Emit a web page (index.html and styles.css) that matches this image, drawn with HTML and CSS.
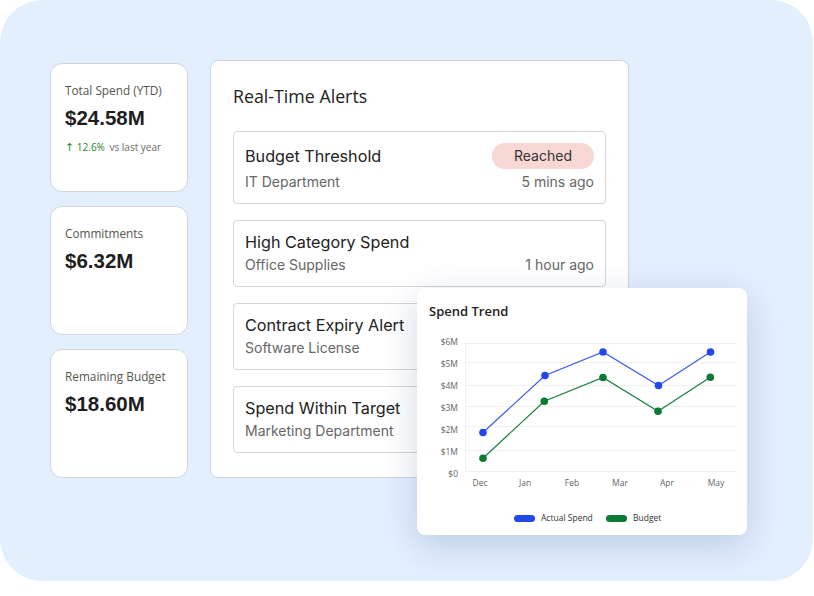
FILE: index.html
```html
<!DOCTYPE html>
<html lang="en">
<head>
    <meta charset="UTF-8">
    <meta name="viewport" content="width=device-width, initial-scale=1.0">
    <title>Spend Dashboard</title>
    <link rel="stylesheet" href="styles.css">
</head>
<body>
    <div class="stage">
        <div class="stats">
            <div class="stat-card">
                <div class="stat-label">Total Spend (YTD)</div>
                <div class="stat-value">$24.58M</div>
                <div class="stat-change"><span class="up"><span class="arrow">&#8593;</span> 12.6%</span> vs last year</div>
            </div>
            <div class="stat-card">
                <div class="stat-label">Commitments</div>
                <div class="stat-value">$6.32M</div>
            </div>
            <div class="stat-card">
                <div class="stat-label">Remaining Budget</div>
                <div class="stat-value">$18.60M</div>
            </div>
        </div>

        <div class="alerts">
            <h2 class="alerts-title">Real-Time Alerts</h2>
            <div class="alert">
                <div class="alert-row">
                    <span class="alert-name">Budget Threshold</span>
                    <span class="badge">Reached</span>
                </div>
                <div class="alert-row sub">
                    <span>IT Department</span>
                    <span>5 mins ago</span>
                </div>
            </div>
            <div class="alert">
                <div class="alert-row">
                    <span class="alert-name">High Category Spend</span>
                </div>
                <div class="alert-row sub">
                    <span>Office Supplies</span>
                    <span>1 hour ago</span>
                </div>
            </div>
            <div class="alert">
                <div class="alert-row">
                    <span class="alert-name">Contract Expiry Alert</span>
                </div>
                <div class="alert-row sub">
                    <span>Software License</span>
                </div>
            </div>
            <div class="alert">
                <div class="alert-row">
                    <span class="alert-name">Spend Within Target</span>
                </div>
                <div class="alert-row sub">
                    <span>Marketing Department</span>
                </div>
            </div>
        </div>

        <div class="trend-card">
            <div class="trend-title">Spend Trend</div>
            <svg class="trend-chart" width="330" height="217" viewBox="417 318 330 217">
                <g class="grid">
                    <line x1="465" y1="343.5" x2="736" y2="343.5"/>
                    <line x1="465" y1="362.5" x2="736" y2="362.5"/>
                    <line x1="465" y1="385.5" x2="736" y2="385.5"/>
                    <line x1="465" y1="406.5" x2="736" y2="406.5"/>
                    <line x1="465" y1="426.5" x2="736" y2="426.5"/>
                    <line x1="465" y1="450.5" x2="736" y2="450.5"/>
                    <line x1="465" y1="471.5" x2="736" y2="471.5"/>
                    <line x1="465.5" y1="343" x2="465.5" y2="472"/>
                </g>
                <g class="y-labels">
                    <text x="458" y="343">$6M</text>
                    <text x="458" y="365">$5M</text>
                    <text x="458" y="387">$4M</text>
                    <text x="458" y="409">$3M</text>
                    <text x="458" y="431">$2M</text>
                    <text x="458" y="453">$1M</text>
                    <text x="458" y="475">$0</text>
                </g>
                <g class="x-labels">
                    <text x="480" y="484">Dec</text>
                    <text x="525" y="484">Jan</text>
                    <text x="572" y="484">Feb</text>
                    <text x="620" y="484">Mar</text>
                    <text x="667" y="484">Apr</text>
                    <text x="716" y="484">May</text>
                </g>
                <g class="series actual">
                    <polyline points="483,432.5 545,375.5 603,352 658.5,385.5 710.5,352"/>
                    <circle cx="483" cy="432.5" r="3.8"/>
                    <circle cx="545" cy="375.5" r="3.8"/>
                    <circle cx="603" cy="352" r="3.8"/>
                    <circle cx="658.5" cy="385.5" r="3.8"/>
                    <circle cx="710.5" cy="352" r="3.8"/>
                </g>
                <g class="series budget">
                    <polyline points="483,458.3 544.3,401.3 603,377.5 658,411.3 710.3,377.3"/>
                    <circle cx="483" cy="458.3" r="3.8"/>
                    <circle cx="544.3" cy="401.3" r="3.8"/>
                    <circle cx="603" cy="377.5" r="3.8"/>
                    <circle cx="658" cy="411.3" r="3.8"/>
                    <circle cx="710.3" cy="377.3" r="3.8"/>
                </g>
                <g class="legend">
                    <rect class="key-actual" x="514" y="515" width="21" height="7" rx="3.5"/>
                    <text x="541" y="518.5">Actual Spend</text>
                    <rect class="key-budget" x="606" y="515" width="21" height="7" rx="3.5"/>
                    <text x="633" y="518.5">Budget</text>
                </g>
            </svg>
        </div>
    </div>
</body>
</html>
```

FILE: styles.css
```css
body {
    margin: 0;
    background-color: #ffffff;
    font-family: "Open Sans", "Noto Sans", sans-serif;
}
.stage {
    position: relative;
    width: 813px;
    height: 581px;
    box-sizing: border-box;
    padding: 60px 0 0 50px;
    background-color: #e4effe;
    border-radius: 42px;
    display: flex;
    flex-direction: row;
    align-items: flex-start;
    gap: 22px;
}
.stats {
    display: flex;
    flex-direction: column;
    gap: 14px;
    margin-top: 3px;
}
.stat-card {
    width: 138px;
    height: 129px;
    box-sizing: border-box;
    padding: 18px 8px 0 14px;
    background: #ffffff;
    border: 1px solid #d3d5d8;
    border-radius: 12px;
}
.stat-label {
    font-size: 11.8px;
    line-height: 16px;
    color: #55564b;
}
.stat-value {
    margin-top: 7px;
    font-family: "Liberation Sans", Arial, sans-serif;
    font-weight: bold;
    font-size: 20.5px;
    line-height: 26px;
    color: #1e1e1e;
}
.stat-change {
    margin-top: 9px;
    font-size: 10px;
    line-height: 14px;
    color: #6a6a6a;
}
.up {
    color: #1d8a2a;
    margin-right: 2px;
}
.arrow {
    font-family: "DejaVu Sans", sans-serif;
    font-size: 11px;
    line-height: 14px;
}
.alerts {
    width: 419px;
    height: 418px;
    box-sizing: border-box;
    padding: 0 22px;
    background: #ffffff;
    border: 1px solid #d2d4d8;
    border-radius: 8px;
}
.alerts-title {
    margin: 23px 0 22px;
    font-size: 17.8px;
    line-height: 25px;
    font-weight: normal;
    color: #222222;
}
.alert {
    box-sizing: border-box;
    margin-bottom: 16px;
    padding: 11px 11px 12px 11px;
    border: 1px solid #d6d6d6;
    border-radius: 4px;
    font-family: Inter, "Noto Sans", sans-serif;
}
.alert-row {
    display: flex;
    justify-content: space-between;
    align-items: center;
    min-height: 20px;
}
.alert-name {
    font-size: 16.2px;
    line-height: 20px;
    color: #222222;
}
.alert-row.sub {
    margin-top: 4px;
    min-height: 18px;
    height: 18px;
    font-size: 14px;
    line-height: 18px;
    color: #666666;
}
.badge {
    height: 26px;
    line-height: 26px;
    padding: 0 22px;
    border-radius: 13px;
    background: #f8d8d5;
    color: #333333;
    font-size: 14px;
}
.trend-card {
    position: absolute;
    left: 417px;
    top: 288px;
    width: 330px;
    height: 247px;
    background: #ffffff;
    border-radius: 8px;
    box-shadow: 0 10px 36px rgba(45, 75, 130, 0.22);
}
.trend-title {
    height: 30px;
    box-sizing: border-box;
    padding: 14px 0 0 12px;
    font-size: 13px;
    line-height: 18px;
    font-weight: 600;
    color: #222222;
}
.trend-chart {
    display: block;
    font-family: "Open Sans", "Noto Sans", sans-serif;
}
.grid line {
    stroke: #f0f0f0;
    stroke-width: 1;
}
.y-labels text {
    font-size: 8.5px;
    fill: #666666;
    text-anchor: end;
    dominant-baseline: middle;
}
.x-labels text {
    font-size: 8.5px;
    fill: #666666;
    text-anchor: middle;
    dominant-baseline: middle;
}
.series polyline {
    fill: none;
    stroke-width: 1.2;
}
.actual polyline {
    stroke: #3a5cf0;
}
.actual circle,
.key-actual {
    fill: #2248ea;
}
.budget polyline {
    stroke: #1a8042;
}
.budget circle,
.key-budget {
    fill: #0a7a34;
}
.legend text {
    font-size: 8.5px;
    fill: #333333;
    dominant-baseline: middle;
}
```
